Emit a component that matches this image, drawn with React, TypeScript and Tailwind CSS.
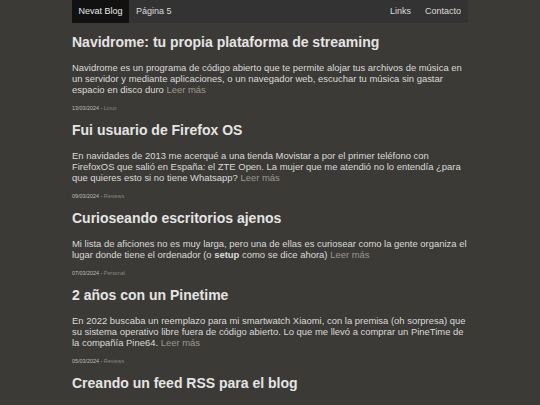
import React from 'react';

type Post = {
  title: string;
  body: React.ReactNode;
  date: string;
  tag: string;
};

const posts: Post[] = [
  {
    title: 'Navidrome: tu propia plataforma de streaming',
    body: 'Navidrome es un programa de código abierto que te permite alojar tus archivos de música en un servidor y mediante aplicaciones, o un navegador web, escuchar tu música sin gastar espacio en disco duro',
    date: '13/03/2024',
    tag: 'Linux',
  },
  {
    title: 'Fui usuario de Firefox OS',
    body: 'En navidades de 2013 me acerqué a una tienda Movistar a por el primer teléfono con FirefoxOS que salió en España: el ZTE Open. La mujer que me atendió no lo entendía ¿para que quieres esto si no tiene Whatsapp?',
    date: '09/03/2024',
    tag: 'Reviews',
  },
  {
    title: 'Curioseando escritorios ajenos',
    body: (
      <>
        Mi lista de aficiones no es muy larga, pero una de ellas es curiosear como la gente organiza el lugar donde tiene el ordenador (o <strong className="font-bold">setup</strong> como se dice ahora)
      </>
    ),
    date: '07/03/2024',
    tag: 'Personal',
  },
  {
    title: '2 años con un Pinetime',
    body: 'En 2022 buscaba un reemplazo para mi smartwatch Xiaomi, con la premisa (oh sorpresa) que su sistema operativo libre fuera de código abierto. Lo que me llevó a comprar un PineTime de la compañía Pine64.',
    date: '05/03/2024',
    tag: 'Reviews',
  },
  {
    title: 'Creando un feed RSS para el blog',
    body: '',
    date: '',
    tag: '',
  },
];

export default function App() {
  return (
    <div
      className="min-h-screen bg-[#3c3a36] text-[#dedede]"
      style={{ fontFamily: '"Liberation Sans", Arial, sans-serif' }}
    >
      <div className="w-[396px] mx-auto">
        {/* Top nav */}
        <nav className="flex h-[23px] bg-[#333333] text-[9px] text-[#dcdcdc]">
          <a className="flex items-center px-[6.5px] bg-[#111111] text-[#e8e8e8]">Nevat Blog</a>
          <a className="flex items-center px-[7px]">Página 5</a>
          <div className="ml-auto flex">
            <a className="flex items-center px-[7px]">Links</a>
            <a className="flex items-center px-[7px]">Contacto</a>
          </div>
        </nav>

        <main>
          {posts.map((p) => (
            <article key={p.title}>
              <h2 className="mt-[11px] text-[14px] leading-[16px] font-bold text-[#e4e4e4]">
                {p.title}
              </h2>
              {p.body && (
                <p className="mt-[11.5px] text-[9.45px] leading-[11px] text-[#dadada]">
                  {p.body} <a className="text-[#9c9791]">Leer más</a>
                </p>
              )}
              {p.date && (
                <div className="mt-[10px] text-[5.4px] leading-[6.5px]">
                  <span className="text-[#bdbdbd]">{p.date} - </span>
                  <span className="text-[#8c8680]">{p.tag}</span>
                </div>
              )}
            </article>
          ))}
        </main>
      </div>
    </div>
  );
}
